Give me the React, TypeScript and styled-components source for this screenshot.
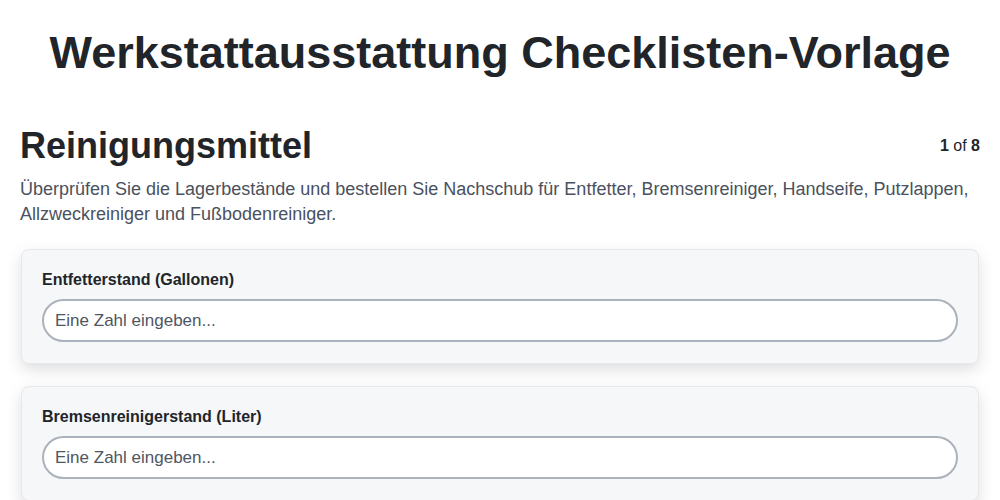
import React from 'react'
import styled, { createGlobalStyle } from 'styled-components'

const GlobalStyle = createGlobalStyle`
  * { box-sizing: border-box; }
  body {
    margin: 0;
    background: #ffffff;
    font-family: 'Liberation Sans', Arial, sans-serif;
    color: #212529;
  }
`

const Page = styled.div`
  padding: 0 20px;
`

const Title = styled.h1`
  margin: 0;
  padding: 26px 0 0;
  text-align: center;
  font-size: 45px;
  line-height: 54px;
  font-weight: 700;
  color: #212529;
`

const SectionHead = styled.div`
  display: flex;
  justify-content: space-between;
  align-items: center;
  margin-top: 44px;
`

const SectionTitle = styled.h2`
  margin: 0;
  font-size: 36px;
  line-height: 44px;
  font-weight: 700;
  color: #212529;
`

const Counter = styled.div`
  font-size: 16px;
  color: #212529;
  b { font-weight: 700; }
`

const Description = styled.p`
  margin: 9px 0 22px;
  font-size: 18px;
  line-height: 25px;
  color: #4a5160;
`

const Card = styled.div`
  background: #f6f7f9;
  border: 1px solid #e6e8ec;
  border-radius: 8px;
  box-shadow: 0 6px 16px rgba(0, 0, 0, 0.13);
  padding: 20px 20px 21px;
  margin: 0 1px 22px;
`

const Label = styled.label`
  display: block;
  font-size: 16px;
  line-height: 20px;
  font-weight: 700;
  color: #212529;
  margin-bottom: 9px;
`

const Input = styled.input`
  display: block;
  width: 100%;
  height: 43px;
  padding: 0 11px;
  border: 2px solid #aab2bb;
  border-radius: 22px;
  background: #ffffff;
  font-family: 'Liberation Sans', Arial, sans-serif;
  font-size: 17px;
  color: #212529;
  outline: none;
  &::placeholder { color: #4f5663; opacity: 1; }
`

const fields = ['Entfetterstand (Gallonen)', 'Bremsenreinigerstand (Liter)']

export default function App() {
  return (
    <>
      <GlobalStyle />
      <Page>
        <Title>Werkstattausstattung Checklisten-Vorlage</Title>
        <SectionHead>
          <SectionTitle>Reinigungsmittel</SectionTitle>
          <Counter>
            <b>1</b> of <b>8</b>
          </Counter>
        </SectionHead>
        <Description>
          Überprüfen Sie die Lagerbestände und bestellen Sie Nachschub für Entfetter, Bremsenreiniger, Handseife,
          Putzlappen, Allzweckreiniger und Fußbodenreiniger.
        </Description>
        {fields.map((f) => (
          <Card key={f}>
            <Label>{f}</Label>
            <Input type="number" placeholder="Eine Zahl eingeben..." />
          </Card>
        ))}
      </Page>
    </>
  )
}
